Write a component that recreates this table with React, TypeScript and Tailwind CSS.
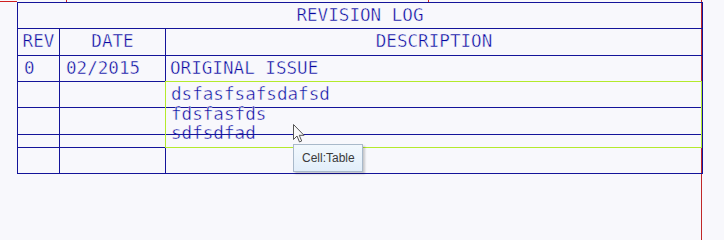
const blue = 'border-[#14149a]'

function Row({ h, cells, last }: { h: string; cells: [string, string, string]; last?: boolean }) {
  return (
    <div className={`flex ${h} ${last ? '' : 'border-b'} ${blue}`}>
      <div className={`w-[42px] shrink-0 border-r ${blue} flex items-center pl-[6px]`}>{cells[0]}</div>
      <div className={`w-[106px] shrink-0 border-r ${blue} flex items-center pl-[6px]`}>{cells[1]}</div>
      <div className="flex-1 flex items-center pl-[4px]">{cells[2]}</div>
    </div>
  )
}

export default function App() {
  return (
    <div
      className="relative w-[724px] h-[240px] overflow-hidden bg-[#f8f8fc] text-[#0606a0] text-[17.6px] leading-none [-webkit-text-stroke:0.45px_#f8f8fc]"
      style={{ fontFamily: '"DejaVu Sans Mono", "Liberation Mono", monospace' }}
    >
      {/* red drawing frame marks */}
      <div className="absolute left-0 top-[1px] w-[17px] h-px bg-[#d02020]" />
      <div className="absolute left-[66px] top-0 w-px h-[3px] bg-[#d02020]" />
      <div className="absolute left-[428px] top-0 w-px h-[3px] bg-[#d02020]" />
      <div className="absolute left-[701px] top-0 w-px h-[240px] bg-[#c02828]" />

      <div className={`relative ml-[17px] mt-[2px] w-[686px] border ${blue}`}>
        <div className={`h-[26px] border-b ${blue} flex items-center justify-center`}>REVISION LOG</div>
        <div className={`flex h-[27px] border-b ${blue}`}>
          <div className={`w-[42px] shrink-0 border-r ${blue} flex items-center justify-center`}>REV</div>
          <div className={`w-[106px] shrink-0 border-r ${blue} flex items-center justify-center`}>DATE</div>
          <div className="flex-1 flex items-center justify-center">DESCRIPTION</div>
        </div>
        <Row h="h-[26px]" cells={['0', '02/2015', 'ORIGINAL ISSUE']} />
        <Row h="h-[26px]" cells={['', '', '']} />
        <Row h="h-[27px]" cells={['', '', '']} />
        <Row h="h-[13px]" cells={['', '', '']} />
        <Row h="h-[25px]" cells={['', '', '']} last />

        {/* selected cell: outline + its multi-line text, drawn over the row lines */}
        <div className="absolute left-[147px] top-[78px] w-[537px] h-[67px] border border-[#b4ea2c]">
          <div className="pl-[5px] pt-[3px] leading-[19.5px]">
            <div>dsfasfsafsdafsd</div>
            <div>fdsfasfds</div>
            <div>sdfsdfad</div>
          </div>
        </div>
        <div className="absolute left-[148px] top-[131px] w-[535px] h-px bg-[#14149a]" />
      </div>

      {/* tooltip */}
      <div
        className="absolute left-[293px] top-[144px] w-[70px] h-[28px] border border-[#a9b9ca] bg-gradient-to-b from-[#f2f8fd] to-[#e2eefa] shadow-[2px_2px_2px_rgba(0,0,0,0.2)] flex items-center pl-[8px] text-[12px] text-[#3a3a3a] [-webkit-text-stroke:0]"
        style={{ fontFamily: '"Liberation Sans", Arial, sans-serif' }}
      >
        Cell:Table
      </div>

      {/* mouse cursor */}
      <svg className="absolute left-[292px] top-[123px]" width="13" height="21" viewBox="0 0 13 21">
        <path
          d="M1.5 1.5 L1.5 16.5 L5 13 L7.5 19 L9.7 18 L7.3 12.3 L12 12.3 Z"
          fill="#fafafa"
          stroke="#555"
          strokeWidth="1"
          strokeLinejoin="round"
        />
      </svg>
    </div>
  )
}
